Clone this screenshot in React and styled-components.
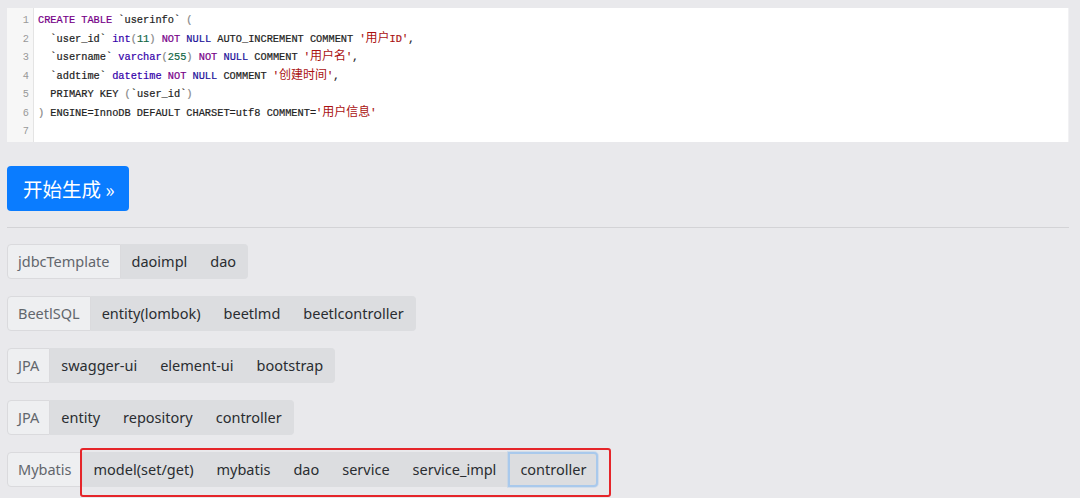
import React from 'react';
import styled, { createGlobalStyle, css } from 'styled-components';

const GlobalStyle = createGlobalStyle`
  html, body {
    margin: 0;
    padding: 0;
    background: #e9e9ec;
  }
  body {
    font-family: "Noto Sans", "Noto Sans CJK SC", sans-serif;
    color: #212529;
  }
`;

// --- Layout ---
const Page = styled.div`
  padding: 8px 11px 0 7px;
  display: flex;
  flex-direction: column;
  align-items: flex-start;
  height: 490px;
  overflow: hidden;
`;

// --- Code editor ---
const Editor = styled.div`
  align-self: stretch;
  display: flex;
  background: #fff;
  height: 134px;
  box-sizing: border-box;
  border-right: 1px solid #f1f1f3;
`;

const Gutter = styled.div`
  width: 27px;
  background: #f7f7f7;
  border-right: 1px solid #e4e4e4;
  padding-top: 3px;
  box-sizing: border-box;
`;

const LineNo = styled.div`
  height: 18.5px;
  line-height: 18.5px;
  text-align: right;
  padding-right: 4px;
  font-family: "Liberation Mono", monospace;
  font-size: 10.3px;
  color: #999;
`;

const Code = styled.div`
  padding: 3px 0 0 4px;
  flex: 1;
`;

const Line = styled.div`
  height: 18.5px;
  line-height: 18.5px;
  white-space: pre;
  font-family: "Liberation Mono", "Noto Sans CJK SC", monospace;
  font-size: 10.3px;
  color: #222;
  -webkit-text-stroke: 0.2px currentColor;
`;

const tokenColors = {
  kw: '#770088',
  atom: '#221199',
  type: '#3300aa',
  num: '#116644',
  str: '#aa1111',
  punc: '#888',
  plain: '#222',
};

const Tok = styled.span`
  color: ${p => tokenColors[p.$kind] || '#222'};
`;

const Cjk = styled.span`
  font-family: "Noto Sans CJK SC", sans-serif;
  font-size: 12px;
  line-height: 1;
  -webkit-text-stroke: 0;
`;

// --- Generate button ---
const GenerateButton = styled.button`
  margin-top: 24px;
  height: 45px;
  padding: 0 14px 0 16px;
  border: none;
  border-radius: 4px;
  background: #0a7cff;
  color: #fff;
  font-family: "Noto Sans CJK SC", sans-serif;
  font-size: 19.5px;
  cursor: pointer;
`;

const Divider = styled.hr`
  align-self: stretch;
  margin: 16px 0 16px;
  border: none;
  border-top: 1px solid #d3d3d6;
`;

// --- Button groups ---
const Rows = styled.div`
  display: flex;
  flex-direction: column;
  gap: 17px;
`;

const Group = styled.div`
  display: inline-flex;
  align-self: flex-start;
  height: 35px;
  font-size: 14.5px;
  line-height: 33px;
`;

const Prefix = styled.span`
  padding: 0 10px;
  background: #eeeff1;
  border: 1px solid #dadadd;
  border-radius: 4px 0 0 4px;
  color: #62666c;
`;

const Buttons = styled.div`
  display: inline-flex;
  position: relative;
  ${p => p.$marked && css`
    &::after {
      content: '';
      position: absolute;
      top: -4px;
      left: -3px;
      right: -13px;
      bottom: -10px;
      border: 2.5px solid #e5252a;
      border-radius: 3px;
      pointer-events: none;
    }
  `}
`;

const Opt = styled.span`
  padding: 0 11px;
  background: #dcdde0;
  border: 1px solid #dcdde0;
  border-left: none;
  color: #2a2d31;
  &:last-child {
    border-radius: 0 4px 4px 0;
  }
  ${p => p.$focused && css`
    border: 2px solid #a9c9ec;
    line-height: 31px;
    padding: 0 10px;
    box-shadow: 0 0 0 1px rgba(170, 200, 235, 0.35);
  `}
`;

const codeLines = [
  [['kw', 'CREATE TABLE'], ['plain', ' `userinfo` '], ['punc', '(']],
  [['plain', '  `user_id` '], ['type', 'int'], ['punc', '('], ['num', '11'], ['punc', ')'], ['plain', ' '], ['kw', 'NOT'], ['plain', ' '], ['atom', 'NULL'], ['plain', ' AUTO_INCREMENT COMMENT '], ['str', "'", '用户', "ID'"], ['plain', ',']],
  [['plain', '  `username` '], ['type', 'varchar'], ['punc', '('], ['num', '255'], ['punc', ')'], ['plain', ' '], ['kw', 'NOT'], ['plain', ' '], ['atom', 'NULL'], ['plain', ' COMMENT '], ['str', "'", '用户名', "'"], ['plain', ',']],
  [['plain', '  `addtime` '], ['type', 'datetime'], ['plain', ' '], ['kw', 'NOT'], ['plain', ' '], ['atom', 'NULL'], ['plain', ' COMMENT '], ['str', "'", '创建时间', "'"], ['plain', ',']],
  [['plain', '  PRIMARY KEY '], ['punc', '('], ['plain', '`user_id`'], ['punc', ')']],
  [['punc', ')'], ['plain', ' ENGINE=InnoDB DEFAULT CHARSET=utf8 COMMENT='], ['str', "'", '用户信息', "'"]],
  [],
];

const groups = [
  { label: 'jdbcTemplate', items: ['daoimpl', 'dao'] },
  { label: 'BeetlSQL', items: ['entity(lombok)', 'beetlmd', 'beetlcontroller'] },
  { label: 'JPA', items: ['swagger-ui', 'element-ui', 'bootstrap'] },
  { label: 'JPA', items: ['entity', 'repository', 'controller'] },
  { label: 'Mybatis', items: ['model(set/get)', 'mybatis', 'dao', 'service', 'service_impl', 'controller'], marked: true, focused: 5 },
];

const App = () => {
  return (
    <>
      <GlobalStyle />
      <Page>
        {/* SQL 编辑器 */}
        <Editor>
          <Gutter>
            {codeLines.map((_, i) => <LineNo key={i}>{i + 1}</LineNo>)}
          </Gutter>
          <Code>
            {codeLines.map((tokens, i) => (
              <Line key={i}>
                {tokens.map(([kind, text, cjk, rest], j) => (
                  <Tok key={j} $kind={kind}>
                    {text}
                    {cjk && <Cjk>{cjk}</Cjk>}
                    {rest}
                  </Tok>
                ))}
                {tokens.length === 0 && ' '}
              </Line>
            ))}
          </Code>
        </Editor>

        <GenerateButton>开始生成 »</GenerateButton>
        <Divider />

        {/* 模板选项 */}
        <Rows>
          {groups.map((g, i) => (
            <Group key={i}>
              <Prefix>{g.label}</Prefix>
              <Buttons $marked={g.marked}>
                {g.items.map((it, j) => (
                  <Opt key={j} $focused={g.focused === j}>{it}</Opt>
                ))}
              </Buttons>
            </Group>
          ))}
        </Rows>
      </Page>
    </>
  );
};

export default App;
